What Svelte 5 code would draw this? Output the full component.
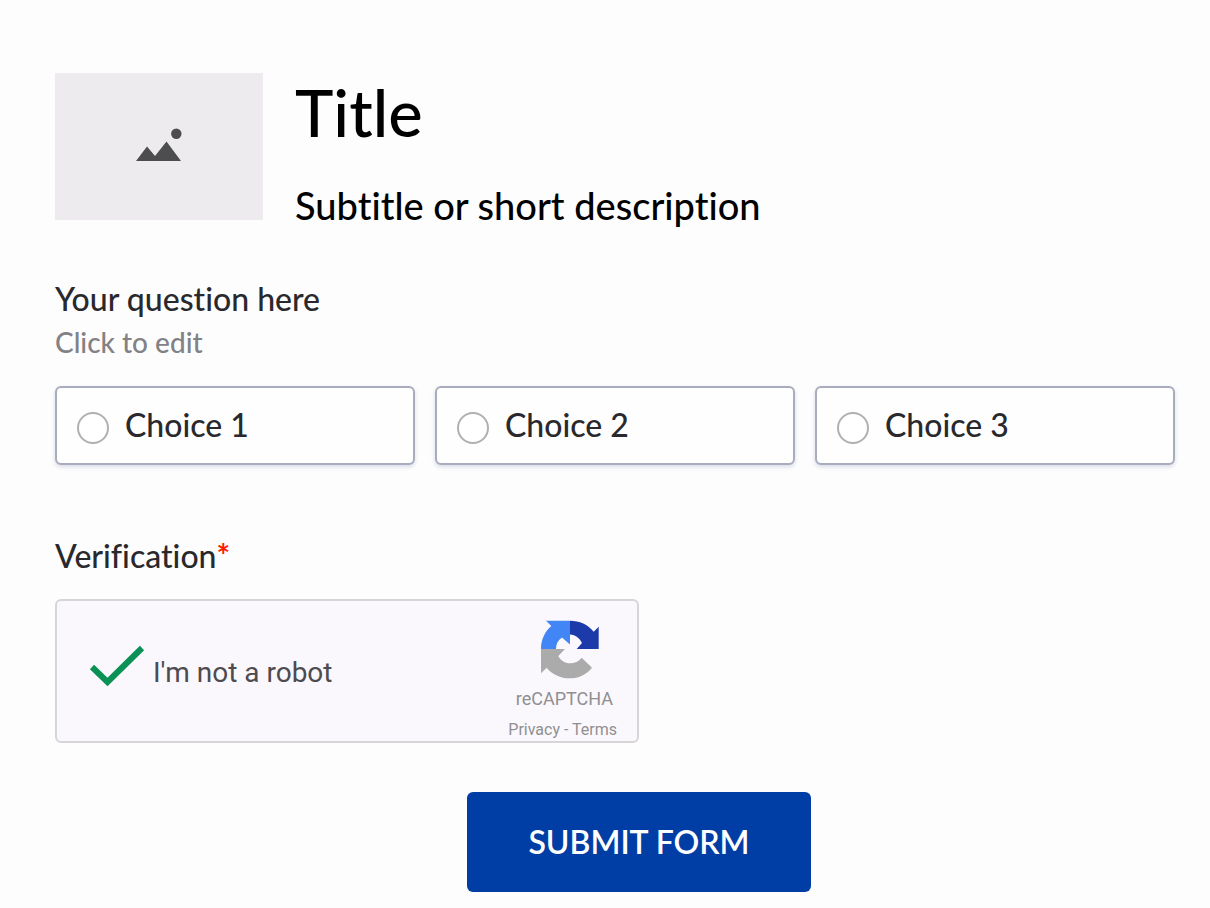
<script>
  const choices = ['Choice 1', 'Choice 2', 'Choice 3'];
  let selected = $state('');
</script>

<form class="page" onsubmit={(e) => e.preventDefault()}>
  <header>
    <div class="thumb">
      <svg width="48" height="42" viewBox="0 0 48 42" aria-hidden="true">
        <path d="M1 35 L12 20.5 L20 30 L31.5 15.5 L46 35 Z" fill="#4d4c4f" />
        <circle cx="41.3" cy="7.700" r="5.2" fill="#4d4c4f" />
      </svg>
    </div>
    <div class="titles">
      <h1>Title</h1>
      <p>Subtitle or short description</p>
    </div>
  </header>

  <fieldset>
    <legend>Your question here</legend>
    <p class="hint">Click to edit</p>
    <div class="choices">
      {#each choices as choice}
        <label class="choice">
          <input type="radio" name="choice" value={choice} bind:group={selected} />
          <span>{choice}</span>
        </label>
      {/each}
    </div>
  </fieldset>

  <section class="verify">
    <h2>Verification<span class="star">*</span></h2>
    <div class="captcha">
      <div class="check">
        <svg width="56" height="56" viewBox="0 0 56 56" aria-hidden="true">
          <path d="M3 23 L18.5 38 L53 4" fill="none" stroke="#0a9156" stroke-width="6" />
        </svg>
        <span>I'm not a robot</span>
      </div>
      <div class="brand">
        <svg class="logo" width="60" height="60" viewBox="0 0 60 60" aria-hidden="true">
          <path d="M30 .7C39.5 .7 48 4.5 53.7 11.7L58.7 6.7V29H36.7L42 23C39.5 18 35.5 14.8 30 14.5Z" fill="#1c3aa9" />
          <path d="M30 .7H6L11.3 6C4.500 12 1 20 1 29H16C16 24 18 20 22 17.500L30 24.500Z" fill="#4285f4" />
          <path d="M1 29H25L18.300 36C20.500 40.500 25 43.300 30 43.300C34.500 43.300 39 41.500 41.700 37.700L52 47.700C46.500 54.500 39 58.300 30 58.300C20.500 58.300 12 54.500 6.700 47.700L1 53.300Z" fill="#ababab" />
        </svg>
        <span class="name">reCAPTCHA</span>
        <span class="links"><a href="#privacy">Privacy</a> - <a href="#terms">Terms</a></span>
      </div>
    </div>
  </section>

  <button type="submit">SUBMIT FORM</button>
</form>

<style>
  :global(body) {
    margin: 0;
    background: #fdfdfd;
  }
  .page {
    display: flex;
    flex-direction: column;
    box-sizing: border-box;
    padding: 73px 35px 16px 55px;
    font-family: Lato, sans-serif;
    font-weight: 500;
    font-variant-ligatures: none;
    color: #29292d;
  }
  h1, h2, p {
    margin: 0;
    font-weight: 500;
  }
  header {
    display: flex;
    gap: 32px;
    color: #000;
  }
  .thumb {
    display: flex;
    align-items: center;
    justify-content: center;
    width: 208px;
    height: 147px;
    background: #edebee;
  }
  h1 {
    font-size: 65px;
    line-height: 78px;
  }
  .titles p {
    margin-top: 28px;
    font-size: 38px;
    line-height: 52px;
  }
  fieldset {
    min-width: 0;
    margin: 48px 0 0;
    padding: 0;
    border: 0;
  }
  legend, h2 {
    padding: 0;
    font-size: 32px;
    line-height: 40px;
  }
  .hint {
    margin-top: 5px;
    font-size: 28px;
    line-height: 36px;
    color: #828286;
  }
  .choices {
    display: grid;
    grid-template-columns: repeat(3, 1fr);
    gap: 20px;
    margin-top: 26px;
  }
  .choice {
    display: flex;
    align-items: center;
    gap: 16px;
    padding: 17px 20px 18px;
    border: 2px solid #a9acbc;
    border-radius: 6px;
    background: #fefefe;
    box-shadow: 0 2px 4px #d8dae8;
    font-size: 32px;
    line-height: 40px;
  }
  .choice input {
    appearance: none;
    box-sizing: border-box;
    width: 32px;
    height: 32px;
    margin: 6px 0 0;
    border: 2px solid #b0afb3;
    border-radius: 50%;
    background: #fff;
  }
  .choice input:checked {
    box-shadow: inset 0 0 0 6px #fff, inset 0 0 0 16px #003da5;
  }
  .verify {
    margin-top: 71px;
  }
  .star {
    color: #ff1a00;
    font-weight: 700;
  }
  .captcha {
    display: flex;
    justify-content: space-between;
    box-sizing: border-box;
    max-width: 584px;
    margin-top: 23px;
    padding: 19px 20px 0 32px;
    border: 2px solid #d6d5d8;
    border-radius: 6px;
    background: #faf8fc;
    font-family: Roboto, sans-serif;
    font-weight: 400;
  }
  .check {
    display: flex;
    align-items: center;
    align-self: flex-start;
    gap: 8px;
    margin-top: 24px;
    font-size: 28px;
    color: #4d4b4f;
  }
  .brand {
    display: flex;
    flex-direction: column;
    align-items: flex-end;
    color: #908f92;
  }
  .logo {
    margin-right: 17px;
  }
  .name {
    margin: 7px 4px 0 0;
    font-size: 18px;
    line-height: 24px;
  }
  .links {
    margin-top: 8px;
    font-size: 16px;
    line-height: 22px;
  }
  a {
    color: inherit;
    text-decoration: none;
  }
  button {
    align-self: center;
    margin: 49px 0 0 48px;
    padding: 28px 61px;
    border: 0;
    border-radius: 6px;
    background: #003da5;
    color: #fff;
    font: 600 32px/44px Lato, sans-serif;
  }
</style>
